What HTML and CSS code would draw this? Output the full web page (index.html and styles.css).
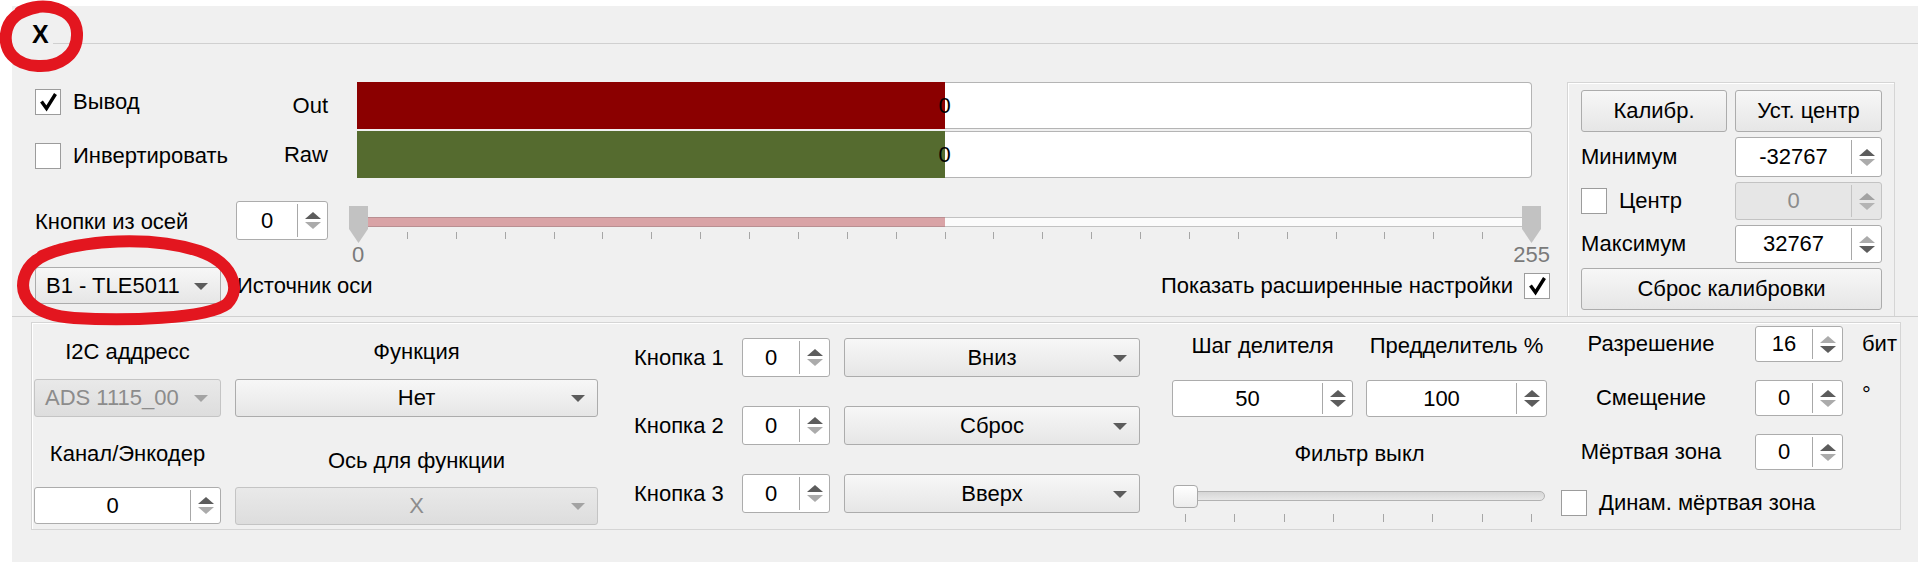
FILE: index.html
```html
<!DOCTYPE html>
<html lang="ru">
<head>
    <meta charset="UTF-8">
    <title>Ось X</title>
    <link rel="stylesheet" href="styles.css">
</head>
<body>
    <div class="window">
        <div class="legend"><span class="legend-title">X</span><span class="legend-line"></span></div>

        <div class="top">
            <div class="axis">
                <div class="row row-bars">
                    <div class="checks">
                        <label class="check"><span class="box"><svg viewBox="0 0 24 24"><path d="M5.5 11.5 L10.5 18.5 L19.5 4"/></svg></span>Вывод</label>
                        <label class="check"><span class="box"></span>Инвертировать</label>
                    </div>
                    <div class="bar-labels"><span>Out</span><span>Raw</span></div>
                    <div class="bars">
                        <div class="bar">
                            <div class="bar-fill out" style="width: 50%"></div>
                            <div class="bar-rest"></div>
                            <span class="bar-text">0</span>
                        </div>
                        <div class="bar">
                            <div class="bar-fill raw" style="width: 50%"></div>
                            <div class="bar-rest"></div>
                            <span class="bar-text">0</span>
                        </div>
                    </div>
                </div>

                <div class="row row-slider">
                    <span class="row-label">Кнопки из осей</span>
                    <div class="spin w92"><span class="spin-val">0</span><span class="spin-btns"><i class="up"></i><i class="down dim"></i></span></div>
                    <div class="range">
                        <div class="groove"><div class="groove-fill" style="width: 50%"></div></div>
                        <div class="ticks">
                            <i></i><i></i><i></i><i></i><i></i><i></i><i></i><i></i><i></i><i></i><i></i><i></i><i></i>
                            <i></i><i></i><i></i><i></i><i></i><i></i><i></i><i></i><i></i><i></i><i></i><i></i>
                        </div>
                        <div class="range-labels"><span>0</span><span>255</span></div>
                        <span class="handle left"></span>
                        <span class="handle right"></span>
                    </div>
                </div>

                <div class="row row-source">
                    <div class="combo source">B1 - TLE5011</div>
                    <span class="source-label">Источник оси</span>
                    <label class="check adv-check">Показать расширенные настройки<span class="box"><svg viewBox="0 0 24 24"><path d="M5.5 11.5 L10.5 18.5 L19.5 4"/></svg></span></label>
                </div>
            </div>

            <div class="calib">
                <div class="button">Калибр.</div>
                <div class="button">Уст. центр</div>
                <span>Минимум</span>
                <div class="spin"><span class="spin-val">-32767</span><span class="spin-btns"><i class="up"></i><i class="down dim"></i></span></div>
                <label class="check"><span class="box"></span>Центр</label>
                <div class="spin disabled"><span class="spin-val">0</span><span class="spin-btns"><i class="up"></i><i class="down"></i></span></div>
                <span>Максимум</span>
                <div class="spin"><span class="spin-val">32767</span><span class="spin-btns"><i class="up dim"></i><i class="down"></i></span></div>
                <div class="button wide">Сброс калибровки</div>
            </div>
        </div>

        <div class="adv">
            <div class="col col-a">
                <span class="lbl">I2C аддресс</span>
                <div class="combo disabled mt14">ADS 1115_00</div>
                <span class="lbl mt24">Канал/Энкодер</span>
                <div class="spin h37 mt20"><span class="spin-val">0</span><span class="spin-btns"><i class="up"></i><i class="down dim"></i></span></div>
            </div>

            <div class="col col-b">
                <span class="lbl">Функция</span>
                <div class="combo center mt14">Нет</div>
                <span class="lbl mt31">Ось для функции</span>
                <div class="combo center disabled h39 mt13">X</div>
            </div>

            <div class="col col-c">
                <div class="btn-row">
                    <span class="btn-label">Кнопка 1</span>
                    <div class="spin w88"><span class="spin-val">0</span><span class="spin-btns"><i class="up"></i><i class="down dim"></i></span></div>
                    <div class="combo center w296">Вниз</div>
                </div>
                <div class="btn-row">
                    <span class="btn-label">Кнопка 2</span>
                    <div class="spin w88"><span class="spin-val">0</span><span class="spin-btns"><i class="up"></i><i class="down dim"></i></span></div>
                    <div class="combo center w296">Сброс</div>
                </div>
                <div class="btn-row">
                    <span class="btn-label">Кнопка 3</span>
                    <div class="spin w88"><span class="spin-val">0</span><span class="spin-btns"><i class="up"></i><i class="down dim"></i></span></div>
                    <div class="combo center w296">Вверх</div>
                </div>
            </div>

            <div class="col col-d">
                <div class="pair">
                    <span class="lbl">Шаг делителя</span>
                    <span class="lbl">Предделитель %</span>
                </div>
                <div class="pair mt21">
                    <div class="spin h37"><span class="spin-val">50</span><span class="spin-btns"><i class="up"></i><i class="down"></i></span></div>
                    <div class="spin h37"><span class="spin-val">100</span><span class="spin-btns"><i class="up"></i><i class="down"></i></span></div>
                </div>
                <span class="lbl mt24">Фильтр выкл</span>
                <div class="filter">
                    <div class="filter-groove"></div>
                    <div class="filter-ticks"><i></i><i></i><i></i><i></i><i></i><i></i><i></i><i></i></div>
                    <span class="filter-handle"></span>
                </div>
            </div>

            <div class="col col-e">
                <span class="e-label">Разрешение</span>
                <div class="spin"><span class="spin-val">16</span><span class="spin-btns"><i class="up dim"></i><i class="down"></i></span></div>
                <span class="unit">бит</span>

                <span class="e-label">Смещение</span>
                <div class="spin"><span class="spin-val">0</span><span class="spin-btns"><i class="up"></i><i class="down dim"></i></span></div>
                <span class="unit deg">°</span>

                <span class="e-label">Мёртвая зона</span>
                <div class="spin"><span class="spin-val">0</span><span class="spin-btns"><i class="up"></i><i class="down dim"></i></span></div>
                <span></span>

                <label class="check dyn"><span class="box"></span>Динам. мёртвая зона</label>
            </div>
        </div>
    </div>

    <svg class="marks" viewBox="0 0 1918 562" width="1918" height="562">
        <path d="M20 12 C43 0 76 8 77 33 C78 56 58 67 38 66 C14 65 4 50 6 34 C8 19 18 11 38 7"/>
        <path d="M42 256 C82 239 152 236 199 251 C231 262 243 288 227 304 C207 319 124 321 74 318 C34 315 19 298 24 278 C28 264 38 256 62 249"/>
    </svg>
</body>
</html>
```

FILE: styles.css
```css
body {
    margin: 0;
    width: 1918px;
    height: 562px;
    overflow: hidden;
    position: relative;
    background-color: #ffffff;
    color: #000000;
    font-family: "Liberation Sans", Arial, sans-serif;
    font-size: 22px;
}
.window {
    margin: 6px 0 0 12px;
    height: 556px;
    background-color: #f0f0f0;
}
.legend {
    display: flex;
    align-items: flex-end;
    height: 38px;
}
.legend-title {
    font-weight: bold;
    font-size: 25px;
    line-height: 25px;
    padding-left: 20px;
    margin-bottom: -3px;
}
.legend-line {
    flex: 1;
    margin-left: 4px;
    border-bottom: 1px solid #d0d0d0;
}

/* top part */
.top {
    display: flex;
    height: 272px;
    border-bottom: 1px solid #d0d0d0;
}
.axis {
    width: 1516px;
    padding: 38px 0 0 23px;
}
.row {
    display: flex;
}
.row-bars {
    height: 96px;
}
.checks {
    width: 201px;
    display: flex;
    flex-direction: column;
    gap: 28px;
    padding-top: 7px;
}
.check {
    display: flex;
    align-items: center;
    gap: 12px;
    height: 26px;
    white-space: nowrap;
}
.box {
    width: 26px;
    height: 26px;
    box-sizing: border-box;
    border: 1px solid #9c9c9c;
    background-color: #ffffff;
    flex: none;
}
.box svg {
    display: block;
    width: 24px;
    height: 24px;
    fill: none;
    stroke: #000000;
    stroke-width: 3.4;
}
.bar-labels {
    width: 92px;
    display: flex;
    flex-direction: column;
    align-items: flex-end;
    gap: 2px;
}
.bar-labels span {
    height: 47px;
    line-height: 47px;
}
.bars {
    width: 1175px;
    margin-left: 29px;
    display: flex;
    flex-direction: column;
    gap: 2px;
}
.bar {
    position: relative;
    display: flex;
    height: 47px;
}
.bar-fill.out {
    background-color: #8b0000;
}
.bar-fill.raw {
    background-color: #556b2f;
}
.bar-rest {
    flex: 1;
    box-sizing: border-box;
    background-color: #ffffff;
    border: 1px solid #b4b4b4;
    border-left: none;
    border-radius: 0 4px 4px 0;
}
.bar-text {
    position: absolute;
    left: 50%;
    top: 0;
    line-height: 47px;
    transform: translateX(-50%);
}

.row-slider {
    margin-top: 23px;
    height: 60px;
    align-items: flex-start;
}
.row-label {
    width: 201px;
    height: 39px;
    line-height: 41px;
}
.range {
    position: relative;
    width: 1192px;
    height: 56px;
    margin: 5px 0 0 21px;
}
.groove {
    display: flex;
    height: 10px;
    margin: 11px 10px 0 10px;
    box-sizing: border-box;
    border: 1px solid #c2c2c2;
    background-color: #fbfbfb;
}
.groove-fill {
    margin: -1px 0;
    background-color: #d9a3a6;
    border: 1px solid #b98f92;
    border-right: none;
    box-sizing: border-box;
}
.ticks {
    display: flex;
    justify-content: space-between;
    height: 7px;
    margin: 5px 9px 0 9px;
}
.ticks i, .filter-ticks i {
    width: 1px;
    background-color: #a6a6a6;
}
.range-labels {
    display: flex;
    justify-content: space-between;
    margin: 3px -9px 0 3px;
    color: #7a7a7a;
    line-height: 26px;
}
.handle {
    position: absolute;
    top: 0;
    width: 19px;
    height: 37px;
    background-color: #c2c2c2;
    clip-path: polygon(0 0, 100% 0, 100% 62%, 50% 100%, 0 62%);
}
.handle.left {
    left: 0;
}
.handle.right {
    right: 0;
}

.row-source {
    margin-top: 6px;
    height: 37px;
    align-items: center;
}
.source-label {
    margin-left: 16px;
}
.adv-check {
    margin-left: auto;
    margin-right: 1px;
    gap: 11px;
}

/* spin boxes */
.spin {
    display: flex;
    box-sizing: border-box;
    height: 39px;
    border: 1px solid #acacac;
    border-radius: 3px;
    background-color: #ffffff;
}
.spin-val {
    flex: 1;
    display: flex;
    align-items: center;
    justify-content: center;
}
.spin-btns {
    width: 29px;
    margin: 2px 0;
    border-left: 1px solid #a8a8a8;
    display: flex;
    flex-direction: column;
    align-items: center;
    justify-content: center;
    gap: 3px;
}
.spin-btns i {
    width: 0;
    height: 0;
    border-left: 8px solid transparent;
    border-right: 8px solid transparent;
}
.spin-btns .up {
    border-bottom: 7px solid #5c5c5c;
}
.spin-btns .down {
    border-top: 7px solid #5c5c5c;
}
.spin-btns .up.dim {
    border-bottom-color: #ababab;
}
.spin-btns .down.dim {
    border-top-color: #ababab;
}
.spin.disabled {
    background-color: #e6e6e6;
    border-color: #c3c3c3;
    color: #8c8c8c;
}
.spin.disabled .spin-btns {
    border-left-color: #c3c3c3;
}
.spin.disabled .up {
    border-bottom-color: #a2a2a2;
}
.spin.disabled .down {
    border-top-color: #b4b4b4;
}
.w92 {
    width: 92px;
}
.w88 {
    width: 88px;
}
.h37 {
    height: 37px;
}
.h39 {
    height: 39px;
}

/* combos and buttons */
.combo, .button {
    display: flex;
    align-items: center;
    box-sizing: border-box;
    height: 38px;
    border: 1px solid #acacac;
    border-radius: 3px;
    background: linear-gradient(#f7f7f7, #e6e6e6);
    white-space: nowrap;
}
.combo {
    position: relative;
    padding: 0 40px 0 10px;
}
.combo::after {
    content: "";
    position: absolute;
    right: 12px;
    top: 50%;
    margin-top: -3px;
    border-left: 7px solid transparent;
    border-right: 7px solid transparent;
    border-top: 7px solid #5c5c5c;
}
.combo.center {
    justify-content: center;
    padding: 0 10px;
}
.combo.disabled {
    background: linear-gradient(#e9e9e9, #dddddd);
    border-color: #c4c4c4;
    color: #8c8c8c;
}
.combo.disabled::after {
    border-top-color: #a3a3a3;
}
.source {
    width: 186px;
    height: 37px;
}
.w296 {
    width: 296px;
}
.button {
    justify-content: center;
    height: 42px;
}

.calib {
    width: 328px;
    height: 234px;
    box-sizing: border-box;
    margin: 38px 0 0 16px;
    padding: 7px 12px 0 13px;
    border: 1px solid #d5d5d5;
    border-bottom: none;
    box-shadow: inset 1px 1px 0 #ffffff;
    display: grid;
    grid-template-columns: 146px 147px;
    grid-template-rows: 42px 40px 38px 38px 42px;
    column-gap: 8px;
    row-gap: 5px;
    align-items: center;
}
.calib .spin {
    height: 100%;
}
.calib .wide {
    grid-column: 1 / 3;
}

/* advanced settings */
.adv {
    display: flex;
    width: 1870px;
    height: 208px;
    box-sizing: border-box;
    margin: 5px 0 0 19px;
    border: 1px solid #d5d5d5;
    box-shadow: inset 1px 1px 0 #ffffff;
}
.col {
    display: flex;
    flex-direction: column;
}
.lbl {
    height: 26px;
    line-height: 26px;
    text-align: center;
    white-space: nowrap;
}
.mt13 { margin-top: 13px; }
.mt14 { margin-top: 14px; }
.mt20 { margin-top: 20px; }
.mt21 { margin-top: 21px; }
.mt24 { margin-top: 24px; }
.mt31 { margin-top: 31px; }

.col-a {
    width: 187px;
    margin-left: 2px;
    padding-top: 16px;
}
.col-b {
    width: 363px;
    margin-left: 14px;
    padding-top: 16px;
}
.col-c {
    width: 506px;
    margin-left: 36px;
    padding-top: 15px;
    gap: 29px;
}
.btn-row {
    display: flex;
    align-items: center;
    height: 39px;
}
.btn-label {
    width: 90px;
    margin-right: 18px;
    white-space: nowrap;
}
.btn-row .combo {
    height: 39px;
    margin-left: 14px;
}
.col-d {
    width: 375px;
    margin-left: 32px;
    padding-top: 10px;
}
.pair {
    display: grid;
    grid-template-columns: 181px 181px;
    column-gap: 13px;
}
.filter {
    position: relative;
    height: 36px;
    margin-top: 18px;
}
.filter-groove {
    height: 10px;
    margin: 6px 2px 0 1px;
    box-sizing: border-box;
    border: 1px solid #b2b2b2;
    border-radius: 5px;
    background: linear-gradient(#d6d6d6, #e8e8e8);
}
.filter-ticks {
    display: flex;
    justify-content: space-between;
    height: 8px;
    margin: 13px 15px 0 13px;
}
.filter-handle {
    position: absolute;
    left: 1px;
    top: 0;
    width: 25px;
    height: 23px;
    box-sizing: border-box;
    border: 1px solid #a9a9a9;
    border-radius: 4px;
    background: linear-gradient(#ffffff, #ececec);
}
.col-e {
    width: 339px;
    margin-left: 14px;
    padding-top: 3px;
    display: grid;
    grid-template-columns: 180px 88px 1fr;
    grid-template-rows: 36px 36px 36px 26px;
    column-gap: 14px;
    row-gap: 18px;
    align-items: center;
}
.col-e .spin {
    height: 36px;
}
.e-label {
    text-align: center;
    white-space: nowrap;
}
.unit {
    margin-left: 5px;
}
.unit.deg {
    align-self: start;
    margin-top: 2px;
}
.dyn {
    grid-column: 1 / 4;
    margin-top: 4px;
}

/* red marker annotations */
.marks {
    position: absolute;
    left: 0;
    top: 0;
    pointer-events: none;
}
.marks path {
    fill: none;
    stroke: #e3161f;
    stroke-width: 12;
    stroke-linecap: round;
    stroke-linejoin: round;
}
```
